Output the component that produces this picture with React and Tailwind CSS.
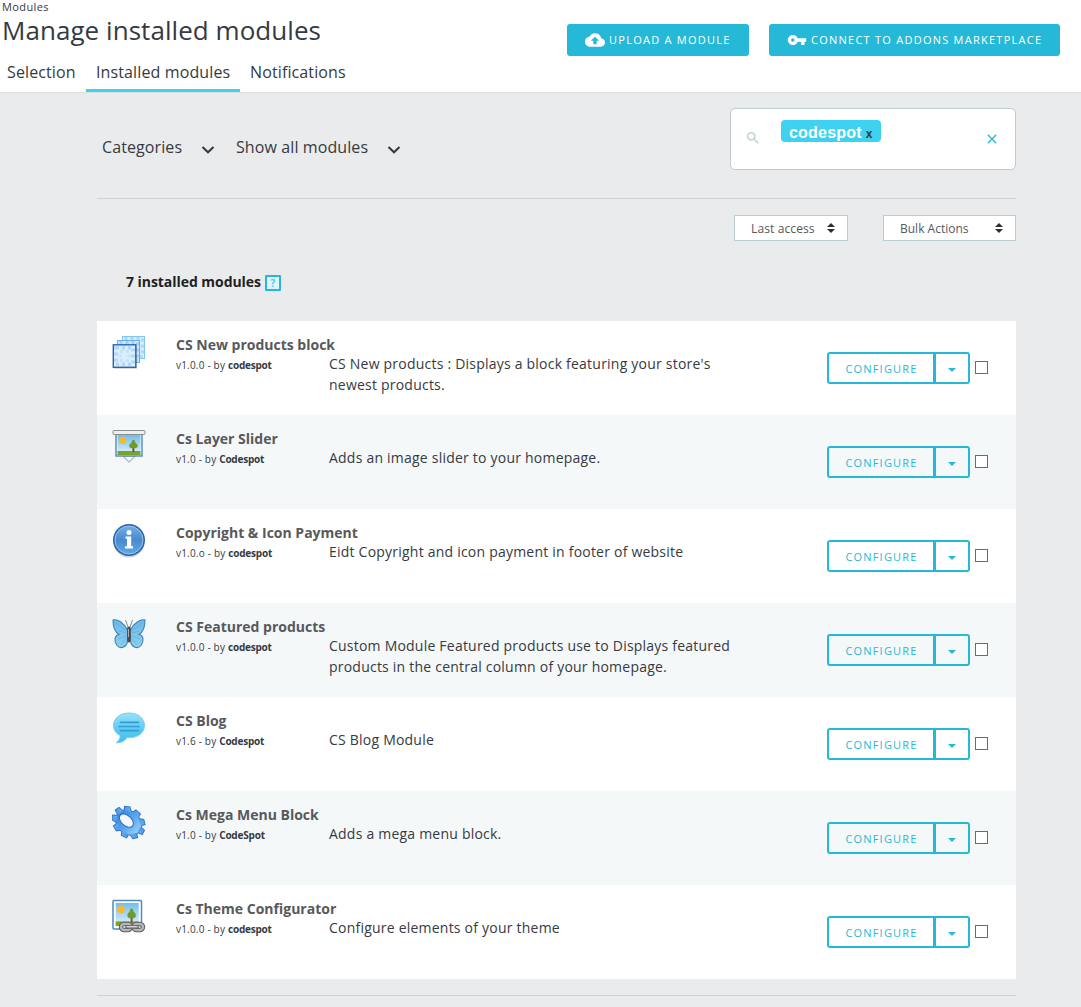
import React from "react";
import { MdCloudUpload, MdVpnKey, MdSearch, MdClose } from "react-icons/md";

function LayersIcon() {
  return (
    <svg width="34" height="35" viewBox="0 0 34 35" fill="none">
      <rect x="10.500" y="1.500" width="22" height="22" fill="#d6edfc" stroke="#84c4f0" />
      <rect x="12.500" y="3.500" width="18" height="18" stroke="#8fc8f0" strokeWidth="3" strokeDasharray="3 3" opacity=".6" />
      <rect x="5.500" y="5.500" width="22" height="22" fill="#cde8fb" stroke="#6baee4" />
      <rect x="7.500" y="7.500" width="18" height="18" stroke="#7bb9ea" strokeWidth="3" strokeDasharray="3 3" opacity=".5" />
      <rect x="2" y="11" width="23" height="23" fill="#000" opacity=".14" />
      <rect x="1.300" y="9.800" width="22.500" height="22.500" fill="#d9effd" stroke="#2a63b3" strokeWidth="1.400" />
      <rect x="4" y="12.500" width="17" height="17" stroke="#8fc0ea" strokeWidth="4" strokeDasharray="3 3" opacity=".5" />
      <rect x="8" y="16.500" width="9" height="9" stroke="#b5dbf6" strokeWidth="3" strokeDasharray="3 3" opacity=".6" />
    </svg>
  );
}

function Scene() {
  return (
    <>
      <rect width="23" height="20" fill="url(#sky)" />
      <circle cx="5.500" cy="5.500" r="3.400" fill="#fbb829" />
      <rect y="16" width="23" height="4" fill="#78a42c" />
      <path d="M15 17v-6h1.800v6z" fill="#7b4a20" />
      <path d="M15.900 4.500q1.800.7 2 3.200q2.600 1.300 2.300 3.600q-.5 2-4.300 2t-4.300-2q-.3-2.300 2.300-3.600q.2-2.500 2-3.200z" fill="#6d9c2b" />
    </>
  );
}

function SliderIcon() {
  return (
    <svg width="34" height="35" viewBox="0 0 34 35" fill="none">
      <path d="M11 27h12l-6 6z" fill="#fff" stroke="#b7babd" strokeWidth="1.300" />
      <rect x="4" y="5" width="26" height="22" fill="#fff" stroke="#4d87bb" strokeWidth="1.400" />
      <g transform="translate(5.500 6)"><Scene /></g>
      <rect x="1" y="1.500" width="32" height="4" rx="1" fill="#eee" stroke="#8c9093" />
    </svg>
  );
}

function InfoIcon() {
  return (
    <svg width="34" height="35" viewBox="0 0 34 35">
      <ellipse cx="17" cy="19" rx="15.500" ry="15.500" fill="#000" opacity=".18" />
      <circle cx="17" cy="17" r="16" fill="#2c66b0" />
      <circle cx="17" cy="17" r="14" fill="url(#info)" stroke="#9cc6ed" />
      <circle cx="17" cy="9.500" r="2.500" fill="#fff" />
      <path d="M13.500 13.500h5.700v9.800h1.800v2.200h-8v-2.200h2v-7.600h-1.500z" fill="#fff" />
    </svg>
  );
}

function ButterflyIcon() {
  return (
    <svg width="34" height="35" viewBox="0 0 34 35" fill="none">
      <path d="M15.500 13C12 6 5 1.500 1 3c0 6 1.500 12 6 14.500-5 1-5 7-2 11 3.500 4 9 2 10.500-4zM18.500 13C22 6 29 1.500 33 3c0 6-1.500 12-6 14.500 5 1 5 7 2 11-3.500 4-9 2-10.500-4z" fill="url(#wing)" stroke="#3b84b8" strokeWidth="1.100" />
      <path d="M14 14L4 6M14 16L7 14M14 19l-8 3M14 21l-5 7M20 14L30 6M20 16l7-2M20 19l8 3M20 21l5 7" stroke="#4e9cce" opacity=".45" />
      <path d="M16 10L13.500 3M18 10l2.500-7" stroke="#8a8d90" />
      <rect x="15.200" y="9.500" width="3.600" height="16" rx="1.800" fill="#4a4c50" />
      <path d="M16.500 12v8" stroke="#a9acae" />
    </svg>
  );
}

function BlogIcon() {
  return (
    <svg width="34" height="35" viewBox="0 0 34 35" fill="none">
      <path d="M17 2C7.500 2 1.500 7.500 1.500 14.500c0 4.500 2.500 8 6.500 10 .5 3-1.500 5.500-4 7.300 5 .2 9-1.700 11-5.300C25.500 27.500 32.500 22 32.500 14.500c0-7-6-12.500-15.500-12.500z" fill="url(#blog)" stroke="#79d0f3" />
      <path d="M8.500 11.300h18M7 15.500h20M8.500 19.700h18" stroke="#2d9fd4" strokeWidth="1.700" strokeLinecap="round" />
    </svg>
  );
}

function GearIcon() {
  const teeth = [0, 40, 80, 120, 160, 200, 240, 280, 320];
  return (
    <svg width="34" height="35" viewBox="0 0 34 35" fill="none">
      <g transform="translate(16.500 17.500) rotate(42) scale(1.140 .92)">
        <mask id="gearHole">
          <rect x="-20" y="-20" width="40" height="40" fill="#fff" />
          <ellipse cx="-2.500" cy="0" rx="7.200" ry="5.400" fill="#000" />
        </mask>
        <g mask="url(#gearHole)">
          <g fill="#3272bf">
            <circle r="12.800" />
            {teeth.map((a) => (
              <path key={a} d="M-4-11l1-5.200h6l1 5.200z" transform={`rotate(${a})`} />
            ))}
          </g>
          <g fill="url(#gear)">
            <circle r="12" />
            {teeth.map((a) => (
              <path key={a} d="M-3-11l.8-4.300h4.400l.8 4.300z" transform={`rotate(${a})`} />
            ))}
          </g>
        </g>
        <ellipse cx="-2.500" cy="0" rx="7.300" ry="5.500" stroke="#2c6cba" />
      </g>
    </svg>
  );
}

function ThemeIcon() {
  return (
    <svg width="34" height="35" viewBox="0 0 34 35" fill="none">
      <rect x="1" y="1.500" width="28.500" height="28.500" rx="1" fill="#fff" stroke="#4b8ac4" strokeWidth="1.500" />
      <g transform="translate(3.700 4) scale(1 1.150)"><Scene /></g>
      <g strokeWidth="4.400" stroke="#5c5e60">
        <rect x="9" y="25" width="10" height="6" rx="3" />
        <rect x="21.500" y="25" width="9.500" height="6" rx="3" />
      </g>
      <g strokeWidth="2.400" stroke="#b4b6b8">
        <rect x="9" y="25" width="10" height="6" rx="3" />
        <rect x="21.500" y="25" width="9.500" height="6" rx="3" />
      </g>
      <path d="M15 28h10" stroke="#5c5e60" strokeWidth="3.600" strokeLinecap="round" />
      <path d="M15 27.800h10" stroke="#d3d5d6" strokeWidth="1.500" strokeLinecap="round" />
    </svg>
  );
}

function Gradients() {
  return (
    <svg className="absolute size-0">
      <defs>
        <linearGradient id="sky" x2="0" y2="1"><stop stopColor="#72bdec" /><stop offset="1" stopColor="#e3f3fb" /></linearGradient>
        <linearGradient id="info" x2="0" y2="1"><stop stopColor="#75ade1" /><stop offset=".5" stopColor="#478bd0" /><stop offset="1" stopColor="#5fa8e6" /></linearGradient>
        <linearGradient id="wing" x2="0" y2="1"><stop stopColor="#6ab9e6" /><stop offset="1" stopColor="#8fcff0" /></linearGradient>
        <linearGradient id="blog" x2="0" y2="1"><stop stopColor="#9be0f9" /><stop offset=".6" stopColor="#58c8f2" /><stop offset="1" stopColor="#45bdec" /></linearGradient>
        <linearGradient id="gear" gradientUnits="userSpaceOnUse" x1="-15" y1="0" x2="15" y2="0"><stop stopColor="#2f80da" /><stop offset=".5" stopColor="#55a3ef" /><stop offset="1" stopColor="#a9d8fc" /></linearGradient>
      </defs>
    </svg>
  );
}

const modules = [
  { Icon: LayersIcon, name: "CS New products block", version: "v1.0.0", author: "codespot", text: ["CS New products : Displays a block featuring your store's", "newest products."] },
  { Icon: SliderIcon, name: "Cs Layer Slider", version: "v1.0", author: "Codespot", text: ["Adds an image slider to your homepage."] },
  { Icon: InfoIcon, name: "Copyright & Icon Payment", version: "v1.0.o", author: "codespot", text: ["Eidt Copyright and icon payment in footer of website"] },
  { Icon: ButterflyIcon, name: "CS Featured products", version: "v1.0.0", author: "codespot", text: ["Custom Module Featured products use to Displays featured", "products in the central column of your homepage."] },
  { Icon: BlogIcon, name: "CS Blog", version: "v1.6", author: "Codespot", text: ["CS Blog Module"] },
  { Icon: GearIcon, name: "Cs Mega Menu Block", version: "v1.0", author: "CodeSpot", text: ["Adds a mega menu block."] },
  { Icon: ThemeIcon, name: "Cs Theme Configurator", version: "v1.0.0", author: "codespot", text: ["Configure elements of your theme"] },
];

function ModuleRow({ Icon, name, version, author, text }) {
  return (
    <li className="flex h-[94px] items-start whitespace-nowrap bg-white pl-[15px] even:bg-[#f4f8f9]">
      <div className="w-16 shrink-0 pt-[14px]"><Icon /></div>
      <div className="w-[153px] shrink-0 pt-[14px]">
        <h3 className="text-[14px] leading-5 font-bold text-[#58595b]">{name}</h3>
        <p className="mt-[2px] text-[10px] leading-4"><span className="tracking-[0.2px]">{version} - by </span><b className="tracking-[-0.2px]">{author}</b></p>
      </div>
      <div className="w-[498px] shrink-0 pt-8 text-[14px] leading-[21px] tracking-[0.22px]">
        {text.map((line) => <p key={line}>{line}</p>)}
      </div>
      <div className="mt-[31px] flex h-8 w-[143px] shrink-0 rounded-[3px] border-2 border-[#25b9d7] text-[#25b9d7]">
        <button className="w-[104px] pt-[2px] pl-px text-[11px] font-medium tracking-[1.2px]">CONFIGURE</button>
        <button className="flex flex-1 items-center justify-center border-l-[3px] border-[#25b9d7]">
          <svg className="mt-[3px]" width="8" height="4" viewBox="0 0 8 4" fill="currentColor"><path d="M0 0h8L4 4z" /></svg>
        </button>
      </div>
      <span className="mt-10 ml-[5px] size-[13px] shrink-0 border border-[#6b6b6b] bg-white" />
    </li>
  );
}

function Chevron() {
  return (
    <svg className="mt-[10px] ml-[2px]" width="14" height="10" viewBox="0 0 14 10" fill="none">
      <path d="M1.500 2l5.500 5.300L12.500 2" stroke="#363a41" strokeWidth="2.100" />
    </svg>
  );
}

function Select({ label, className }) {
  return (
    <button className={`flex h-[26px] items-center justify-between border border-[#bbcdd2] bg-white pr-3 pl-4 text-[12px] text-[#55595c] ${className}`}>
      <span className="pt-px">{label}</span>
      <svg width="8" height="10" viewBox="0 0 8 10" fill="#2c2f33"><path d="M0 4l4-4 4 4zM0 6h8l-4 4z" /></svg>
    </button>
  );
}

export default function App() {
  return (
    <div className="h-[1007px] w-[1081px] overflow-hidden bg-[#eaebec] font-['Open_Sans',sans-serif] text-[#363a41]">
      <Gradients />
      <header className="flex h-[93px] justify-between whitespace-nowrap border-b border-[#dddddd] bg-white">
        <div className="flex flex-col">
          <p className="h-[15px] pl-[2px] text-[11px] leading-[14px] tracking-[0.4px]">Modules</p>
          <h1 className="pl-[2px] text-[26px] leading-[30px] tracking-[0.05px]">Manage installed modules</h1>
          <nav className="mt-[7px] flex text-[16px] leading-10 tracking-[0.12px]">
            <a className="h-10 w-[86px] pl-[7px]">Selection</a>
            <a className="h-10 w-[154px] border-b-3 border-[#3ed2f0] pl-[10px]">Installed modules</a>
            <a className="h-10 pl-[10px]">Notifications</a>
          </nav>
        </div>
        <div className="mt-6 mr-[21px] flex gap-5 text-[11px] tracking-[1.25px] text-white">
          <button className="flex h-8 w-[182px] items-center rounded-[3px] bg-[#25b9d7] pl-[18px]">
            <MdCloudUpload size={20} /><span className="ml-1 pt-px">UPLOAD A MODULE</span>
          </button>
          <button className="flex h-8 w-[291px] items-center rounded-[3px] bg-[#25b9d7] pl-[18px]">
            <MdVpnKey size={20} /><span className="ml-1 pt-px">CONNECT TO ADDONS MARKETPLACE</span>
          </button>
        </div>
      </header>
      <main className="ml-[97px] w-[919px]">
        <div className="flex h-[106px] items-start justify-between border-b border-[#cfd1d3] pt-[15px]">
          <div className="flex pt-[27px] pl-[5px] text-[16px] leading-6 tracking-[0.1px]">
            <button className="flex w-[134px]"><span className="w-[97px] text-left">Categories</span><Chevron /></button>
            <button className="flex"><span className="w-[149px] text-left">Show all modules</span><Chevron /></button>
          </div>
          <div className="flex h-[62px] w-[286px] rounded-[5px] border border-[#bbcdd2] bg-white">
            <MdSearch size={16} className="mt-[21px] ml-[14px] text-[#bbcdd2]" />
            <span className="mt-[11px] ml-5 flex h-[22px] w-[100px] items-baseline rounded-[4px] bg-[#3ed2f0] pl-2 font-['Liberation_Sans',sans-serif] text-[16px] leading-[25px] font-bold tracking-[0.2px] text-white">
              codespot<span className="ml-1 text-[12px] text-[#363a41]">x</span>
            </span>
            <MdClose size={16} className="mt-[22px] ml-[103px] text-[#25b9d7]" />
          </div>
        </div>
        <div className="mt-4 flex justify-end gap-[35px]">
          <Select label="Last access" className="w-[114px] tracking-[0.12px]" />
          <Select label="Bulk Actions" className="w-[133px]" />
        </div>
        <div className="flex h-20 items-start pt-[31px] pl-[29px]">
          <h2 className="text-[14px] leading-5 font-bold tracking-[-0.05px] text-[#1d1f22]">7 installed modules</h2>
          <span className="mt-[3px] ml-1 flex size-4 items-center justify-center rounded-[1px] border-2 border-[#25b9d7] bg-[#dff5fa] text-[10px] font-bold text-[#3ed2f0]">?</span>
        </div>
        <ul>{modules.map((m) => <ModuleRow key={m.name} {...m} />)}</ul>
        <div className="mt-4 h-px bg-[#cfd1d3]" />
      </main>
    </div>
  );
}
